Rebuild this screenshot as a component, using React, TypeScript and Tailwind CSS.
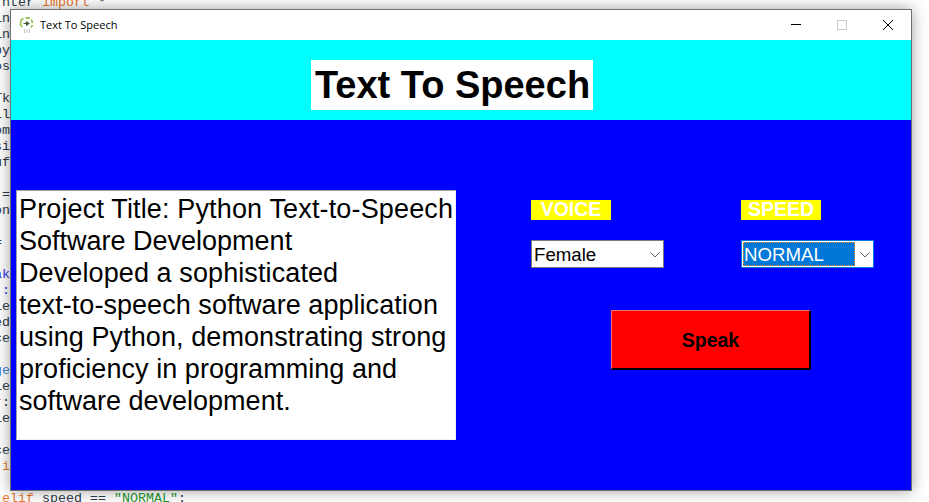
import React from "react";

type Seg = { t: string; c?: string };
const D = "text-[#2b3a4a]";
const O = "text-[#e8782a]";
const G = "text-[#1f9a2f]";
const B = "text-[#2a3ae0]";
const L = "text-[#3a86c8]";

const rows: Seg[][] = [
  [{ t: " nter " }, { t: "import", c: O }, { t: " *" }],
  [{ t: "in" }],
  [{ t: "in" }],
  [{ t: "py" }],
  [{ t: "os" }],
  [],
  [{ t: "Tk" }],
  [{ t: "il" }],
  [{ t: "om" }],
  [{ t: "si" }],
  [{ t: "uf" }],
  [],
  [{ t: " =" }],
  [{ t: "on" }],
  [],
  [{ t: "=" }],
  [],
  [{ t: "ak", c: B }],
  [{ t: " :", c: B }],
  [{ t: "le" }],
  [{ t: "ed" }],
  [{ t: "ce" }],
  [],
  [{ t: "ge", c: L }],
  [{ t: "ie" }],
  [{ t: "r", c: O }, { t: ":" }],
  [{ t: "ie" }],
  [],
  [{ t: "ce" }],
  [{ t: " i", c: O }],
  [],
  [{ t: " elif", c: O }, { t: " speed == " }, { t: '"NORMAL"', c: G }, { t: ":" }],
];

function Chevron() {
  return (
    <svg width="10" height="6" viewBox="0 0 10 6" fill="none" stroke="#606060" strokeWidth="1">
      <path d="M0.5 0.5 L5 5 L9.5 0.5" />
    </svg>
  );
}

function AppIcon() {
  return (
    <svg width="16" height="16" viewBox="0 0 16 16" fill="none">
      <path d="M3.5 10 L1.5 8 L2 3 L4.5 1.5" stroke="#8cc63f" strokeWidth="1.5" />
      <path d="M6.5 1 L11 1 M12.5 2.5 L13.5 6 M13.5 8 L12 10.5" stroke="#7ab82e" strokeWidth="1.4" />
      <path d="M7 4 L7 9 L11 6.5 Z" fill="#3f5a2a" />
      <path d="M4.5 6.5 H7" stroke="#3f5a2a" />
      <path d="M5 13 H6 M7.5 13 H8.5 M10 13 H11 M5 15 H6 M7.5 15 H8.5 M10 15 H11" stroke="#8a8a8a" />
    </svg>
  );
}

export default function App() {
  return (
    <div
      className="relative h-[502px] w-[929px] overflow-hidden bg-white"
      style={{ fontFamily: '"Liberation Sans", Arial, sans-serif' }}
    >
      <div className="-mt-[5px] -ml-[6px] font-['Liberation_Mono',monospace] text-[13.33px] leading-4 whitespace-pre">
        {rows.map((r, i) => (
          <div key={i} className={`h-4 ${D}`}>
            {r.map((s, j) => (
              <span key={j} className={s.c}>
                {s.t}
              </span>
            ))}
          </div>
        ))}
      </div>

      <div className="absolute left-[10px] top-[9px] w-[902px] border border-[#707070] shadow-[0_0_14px_rgba(0,0,0,0.38)]">
        <div className="flex h-[30px] items-center bg-white pl-[8px]">
          <AppIcon />
          <span className="ml-[5px] font-['Open_Sans',sans-serif] text-[11px] text-black">Text To Speech</span>
          <div className="ml-auto flex">
            <div className="flex h-[30px] w-[46px] items-center justify-center">
              <svg width="10" height="10" viewBox="0 0 10 10">
                <path d="M0 4.5 H10" stroke="#000" strokeWidth="1" />
              </svg>
            </div>
            <div className="flex h-[30px] w-[46px] items-center justify-center">
              <svg width="10" height="10" viewBox="0 0 10 10" fill="none">
                <rect x="0.5" y="0.5" width="9" height="9" stroke="#cccccc" />
              </svg>
            </div>
            <div className="flex h-[30px] w-[46px] items-center justify-center">
              <svg width="10" height="10" viewBox="0 0 10 10" fill="none">
                <path d="M0 0 L10 10 M10 0 L0 10" stroke="#000" strokeWidth="1" />
              </svg>
            </div>
          </div>
        </div>

        <div className="h-[80px] bg-[#00ffff] pl-[300px] pt-[20px]">
          <div className="flex h-[50px] w-[282px] items-center justify-center bg-white pl-px pt-px text-[38px] font-bold text-black">
            Text To Speech
          </div>
        </div>

        <div className="flex h-[370px] items-start bg-[#0000ff] pl-[5px] pt-[70px]">
          <div className="h-[250px] w-[440px] border border-b-[#f0f0f0] border-l-[#a0a0a0] border-r-[#f0f0f0] border-t-[#a0a0a0] bg-white pl-[2px] pt-[2px] text-[27px] leading-8 whitespace-nowrap text-black">
            <div className="tracking-[0.15px]">Project Title: Python Text-to-Speech</div>
            <div>Software Development</div>
            <div className="tracking-[0.1px]">Developed a sophisticated</div>
            <div className="tracking-[0.05px]">text-to-speech software application</div>
            <div className="tracking-[0.08px]">using Python, demonstrating strong</div>
            <div className="tracking-[0.05px]">proficiency in programming and</div>
            <div>software development.</div>
          </div>

          <div className="ml-[75px] mt-[10px] w-[343px]">
            <div className="flex gap-[130px]">
              <div className="flex h-5 w-20 items-center justify-center bg-[#ffff00] text-[19.5px] font-bold text-white">
                VOICE
              </div>
              <div className="flex h-5 w-20 items-center justify-center bg-[#ffff00] text-[19.5px] font-bold text-white">
                SPEED
              </div>
            </div>

            <div className="mt-5 flex gap-[77px]">
              <div className="flex h-7 w-[133px] items-center border border-[#7a7a7a] bg-white pl-[2px] pr-px pt-px text-[18.67px] text-black">
                <span>Female</span>
                <span className="ml-auto flex w-[14px] justify-center">
                  <Chevron />
                </span>
              </div>
              <div className="flex h-7 w-[133px] items-center border border-[#0078d7] bg-white pl-px pr-px text-[18.67px]">
                <span className="flex h-6 w-[112px] items-center border border-dotted border-[#ff8a20] bg-[#0078d7] pt-px text-white">
                  NORMAL
                </span>
                <span className="ml-auto flex w-[14px] justify-center pt-px">
                  <Chevron />
                </span>
              </div>
            </div>

            <div className="ml-20 mt-[42px] flex h-[60px] w-[200px] items-center justify-center border border-b-2 border-r-2 border-b-black border-l-[#ff6a6a] border-r-black border-t-[#ff6a6a] bg-[#ff0000] pt-[2px] text-[19.5px] font-bold text-black">
              Speak
            </div>
          </div>
        </div>
      </div>
    </div>
  );
}
